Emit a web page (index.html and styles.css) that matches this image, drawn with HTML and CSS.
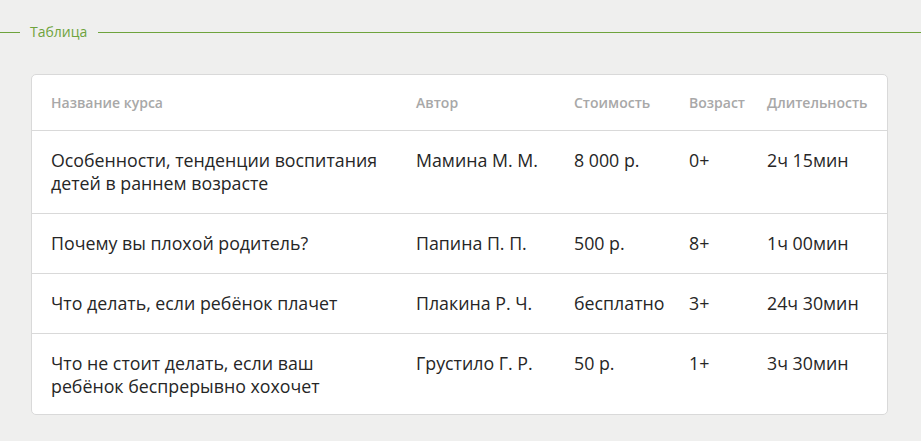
FILE: index.html
```html
<!DOCTYPE html>
<html lang="ru">
<head>
<meta charset="utf-8">
<link rel="stylesheet" href="styles.css">
</head>
<body>
<div class="section-title">
  <span class="line line-short"></span>
  <span class="title">Таблица</span>
  <span class="line line-long"></span>
</div>
<div class="card">
  <div class="row head">
    <div class="cell">Название курса</div>
    <div class="cell">Автор</div>
    <div class="cell">Стоимость</div>
    <div class="cell">Возраст</div>
    <div class="cell">Длительность</div>
  </div>
  <div class="row">
    <div class="cell">Особенности, тенденции воспитания<br>детей в раннем возрасте</div>
    <div class="cell">Мамина М. М.</div>
    <div class="cell">8 000 р.</div>
    <div class="cell">0+</div>
    <div class="cell">2ч 15мин</div>
  </div>
  <div class="row">
    <div class="cell">Почему вы плохой родитель?</div>
    <div class="cell">Папина П. П.</div>
    <div class="cell">500 р.</div>
    <div class="cell">8+</div>
    <div class="cell">1ч 00мин</div>
  </div>
  <div class="row">
    <div class="cell">Что делать, если ребёнок плачет</div>
    <div class="cell">Плакина Р. Ч.</div>
    <div class="cell">бесплатно</div>
    <div class="cell">3+</div>
    <div class="cell">24ч 30мин</div>
  </div>
  <div class="row last">
    <div class="cell">Что не стоит делать, если ваш<br>ребёнок беспрерывно хохочет</div>
    <div class="cell">Грустило Г. Р.</div>
    <div class="cell">50 р.</div>
    <div class="cell">1+</div>
    <div class="cell">3ч 30мин</div>
  </div>
</div>
</body>
</html>
```
FILE: styles.css
```css
html, body {
  margin: 0;
  padding: 0;
  background: #efefee;
  font-family: "Open Sans", "Liberation Sans", sans-serif;
}
body {
  padding-top: 22px;
}
.section-title {
  display: flex;
  align-items: center;
  height: 20px;
}
.line {
  height: 1px;
  background: #6ea33c;
}
.line-short {
  width: 20px;
  margin-right: 10px;
}
.line-long {
  flex: 1;
  margin-left: 11px;
}
.title {
  color: #6ea33c;
  font-size: 14px;
  font-weight: 400;
  line-height: 20px;
}
.card {
  margin: 32px 33px 0 31px;
  background: #fff;
  border: 1px solid #d9d9d9;
  border-radius: 5px;
}
.row {
  display: grid;
  grid-template-columns: 365px 158px 115px 78px 1fr;
  border-bottom: 1px solid #d9d9d9;
  padding: 18px 0 18px;
  color: #262626;
  font-size: 17.8px;
  line-height: 23px;
}
.row.last {
  border-bottom: none;
  padding-bottom: 16px;
}
.row.head {
  padding: 19px 0 19px;
  color: #a8a8a8;
  font-size: 14px;
  font-weight: 600;
  line-height: 17px;
}
.cell {
  padding-left: 19px;
  white-space: nowrap;
}
```
